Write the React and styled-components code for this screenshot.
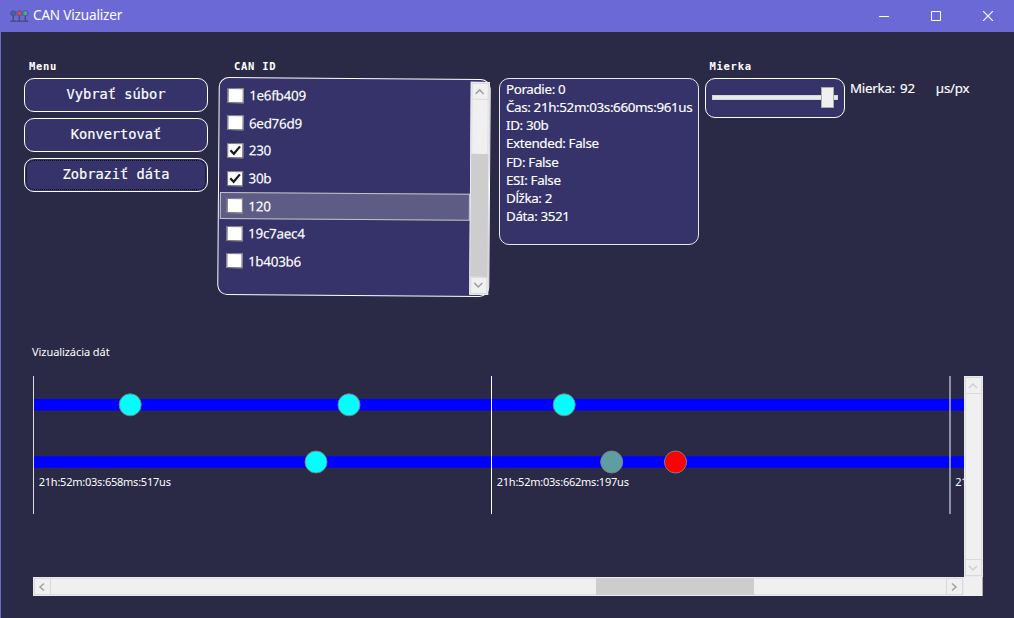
import React from "react";
import styled, { createGlobalStyle } from "styled-components";

const accent = "#6b69d6";
const panel = "#353369";
const sans = '"Noto Sans", "Open Sans", sans-serif';
const mono = '"DejaVu Sans Mono", "Liberation Mono", monospace';

const GlobalStyle = createGlobalStyle`
  *, *::before, *::after { box-sizing: border-box; }
  body { margin: 0; background: #2a2946; color: #fff; font-family: ${sans}; overflow: hidden; }
`;

const Window = styled.div`
  display: flex;
  flex-direction: column;
  width: 1014px;
  height: 618px;
  background: #2a2946;
  border-left: 1px solid ${accent};
`;

const TitleBar = styled.header`
  display: flex;
  align-items: center;
  height: 32px;
  padding-left: 9px;
  background: ${accent};
`;

const Title = styled.h1`
  flex: 1;
  margin: 0 0 2px 4px;
  font-size: 13.5px;
  font-weight: 400;
  letter-spacing: -0.15px;
`;

const Controls = styled.div`
  display: flex;
  height: 28px;
`;

const ControlButton = styled.button`
  display: grid;
  place-items: center;
  width: 52px;
  padding: 0;
  border: 0;
  background: none;
  color: #fff;
`;

const Content = styled.main`
  display: flex;
  flex-direction: column;
  flex: 1;
  padding: 27px 30px 22px 23px;
`;

const TopRow = styled.section`
  display: flex;
  align-items: flex-start;
  height: 285px;
`;

const Column = styled.div`
  flex: none;
  width: ${(p) => p.$width}px;
  margin-left: ${(p) => p.$gap || 0}px;
  padding-top: ${(p) => p.$top || 0}px;
`;

const Label = styled.h2`
  height: 19px;
  margin: 0;
  padding-left: ${(p) => p.$indent || 5}px;
  font: 700 10.5px/14px ${mono};
  letter-spacing: 0.72px;
`;

const Buttons = styled.div`
  display: flex;
  flex-direction: column;
  gap: 6px;
`;

const MenuButton = styled.button`
  height: 34px;
  padding: 1px;
  border: 1px solid #fff;
  border-radius: 10px;
  background: ${panel};
  color: #fff;
  font: 13.7px/26px ${mono};
  -webkit-text-stroke: 0.2px #fff;
  span {
    display: block;
    height: 30px;
    border: 1px ${(p) => (p.$focused ? "dotted #0b0b1c" : "solid transparent")};
    border-radius: 8px;
  }
`;

const ListPanel = styled.div`
  display: flex;
  width: 271.5px;
  height: 217.5px;
  padding: 2px 0 1px 1px;
  border: 1px solid #fff;
  border-radius: 10px;
  background: ${panel};
  transform: rotate(0.42deg);
`;

const Rows = styled.ul`
  flex: 1;
  margin: 0;
  padding: 1.5px 0 0;
  list-style: none;
`;

const Row = styled.li`
  display: flex;
  align-items: center;
  height: 27.6px;
  padding-left: 6px;
  gap: 5.5px;
  border: 1px solid ${(p) => (p.$selected ? "#c2c2cc" : "transparent")};
  background: ${(p) => (p.$selected ? "#5e5c84" : "transparent")};
  font-size: 13.4px;
  letter-spacing: -0.25px;
  -webkit-text-stroke: 0.15px #fff;
`;

const Check = styled.span`
  display: grid;
  place-items: center;
  width: 16px;
  height: 15px;
  border: 1px solid #777;
  background: #fff;
`;

const InfoPanel = styled.div`
  height: 167px;
  padding: 0.6px 0 0 6px;
  border: 1px solid #e8e8f0;
  border-radius: 10px;
  background: ${panel};
  font-size: 13.4px;
  line-height: 18.25px;
  letter-spacing: -0.37px;
  -webkit-text-stroke: 0.15px #fff;
  white-space: nowrap;
`;

const SliderPanel = styled.div`
  display: flex;
  align-items: center;
  height: 40px;
  padding: 0 6px 2px;
  border: 1px solid #fff;
  border-radius: 10px;
  background: ${panel};
`;

const Track = styled.div`
  display: flex;
  align-items: center;
  justify-content: flex-end;
  width: 100%;
  height: 5px;
  padding-right: 3px;
  border: 1px solid #d6d6d6;
  background: #e7eaea;
`;

const Thumb = styled.span`
  width: 13px;
  height: 21px;
  border: 1px solid #acacac;
  background: #f0f0f0;
`;

const Scale = styled.div`
  display: flex;
  gap: ${(p) => p.$gap}px;
  font-size: 13.3px;
  line-height: 18px;
  white-space: nowrap;
  letter-spacing: -0.22px;
  -webkit-text-stroke: 0.15px #fff;
`;

const ChartTitle = styled.h2`
  height: 32px;
  margin: 0;
  padding-left: 8px;
  font-size: 11px;
  line-height: 16px;
  font-weight: 400;
  letter-spacing: -0.07px;
`;

const ChartFrame = styled.section`
  display: grid;
  grid-template-columns: 931px 19px;
  grid-template-rows: 201px 19px;
  margin-left: 9px;
`;

const Bar = styled.div`
  display: flex;
  flex-direction: ${(p) => (p.$vertical ? "column" : "row")};
  width: ${(p) => (p.$vertical ? p.$size + "px" : "auto")};
  height: ${(p) => (p.$vertical ? "auto" : p.$size + "px")};
  border: 1px solid #e9e9f0;
  background: #f0f0f0;
`;

const BarArrow = styled.button`
  display: grid;
  place-items: center;
  flex: none;
  width: 17px;
  height: 17px;
  padding: 0 1px 0 0;
  border: 1px solid #dadada;
  background: #f0f0f0;
  color: ${(p) => (p.$dim ? "#cfcfcf" : "#a0a0a0")};
`;

const BarTrack = styled.div`
  flex: ${(p) => p.$flex || 1};
  background: ${(p) => (p.$thumb ? "#cdcdcd" : "#f0f0f0")};
  border: solid ${(p) => (p.$thumb ? "#cdcdcd" : "#dfdfdf")};
  border-width: ${(p) => (p.$vertical ? "0 1px" : "1px 0")};
`;

const Corner = styled.div`
  background: #f0f0f0;
  border-right: 1px solid #a9a9b2;
`;

const chevrons = {
  up: "M1 7 5 3 9 7",
  down: "M1 3 5 7 9 3",
  left: "M7 1.5 3 5 7 8.5",
  right: "M3 1.5 7 5 3 8.5",
};

const Chevron = ({ dir }) => (
  <svg width="10" height="10" viewBox="0 0 10 10" fill="none" stroke="currentColor" strokeWidth="1.5">
    <path d={chevrons[dir]} />
  </svg>
);

const Logo = () => (
  <svg width="19" height="13" viewBox="0 0 19 13">
    {["#3567a8", "#d5495d", "#3cae9b"].map((color, i) => (
      <g key={color} transform={`translate(${i * 6 - 0.2} 0)`}>
        <path d="M3.5 5v6M.6 11.3h5.8" stroke="#4b4c80" strokeWidth="1.5" />
        <circle cx="3.5" cy="3.3" r="2.6" fill={color} stroke="#56518a" strokeWidth="1" />
      </g>
    ))}
  </svg>
);

const ids = [
  ["1e6fb409"], ["6ed76d9"], ["230", true], ["30b", true], ["120", false, true], ["19c7aec4"], ["1b403b6"],
];

const details = [
  "Poradie: 0", "Čas: 21h:52m:03s:660ms:961us", "ID: 30b", "Extended: False",
  "FD: False", "ESI: False", "Dĺžka: 2", "Dáta: 3521",
];

const ticks = [
  { x: 0.5, text: "21h:52m:03s:658ms:517us", color: "#dcdce2" },
  { x: 458.5, text: "21h:52m:03s:662ms:197us", color: "#fff" },
  { x: 917, text: "21h:52m:03s:665ms:877us", color: "#aaaac0" },
];

const frames = [
  [97.2, 28.8, "#0ff"], [316, 28.8, "#0ff"], [531.2, 28.8, "#0ff"],
  [283, 86, "#0ff"], [578.7, 86, "#5f9ea0"], [642.5, 86, "#f00"],
];

const Timeline = () => (
  <svg width="931" height="201" viewBox="0 0 931 201">
    <path d="M1 28.8h930M1 86h930" stroke="#00f" strokeWidth="11.5" />
    {ticks.map((t) => (
      <g key={t.x}>
        <path d={`M${t.x} 0v138`} stroke={t.color} strokeWidth={t.x === 917 ? 1.6 : 1} />
        <text x={t.x + 5.2} y="110" fill="#fff" fontFamily={sans} fontSize="11" letterSpacing="-0.23">{t.text}</text>
      </g>
    ))}
    {frames.map(([x, y, color]) => (
      <circle key={x} cx={x} cy={y} r="11" fill={color} stroke="#808080" strokeWidth="1" />
    ))}
  </svg>
);

export default function App() {
  return (
    <Window>
      <GlobalStyle />
      <TitleBar>
        <Logo />
        <Title>CAN Vizualizer</Title>
        <Controls>
          <ControlButton aria-label="Minimalizovať">
            <svg width="10" height="10"><path d="M0 5.5h10" stroke="#fff" /></svg>
          </ControlButton>
          <ControlButton aria-label="Maximalizovať">
            <svg width="10" height="10"><path d="M.5.5h9v9h-9z" fill="none" stroke="#fff" /></svg>
          </ControlButton>
          <ControlButton aria-label="Zavrieť">
            <svg width="10" height="10"><path d="M0 0 10 10M10 0 0 10" stroke="#fff" strokeWidth="1.1" /></svg>
          </ControlButton>
        </Controls>
      </TitleBar>
      <Content>
        <TopRow>
          <Column $width={184}>
            <Label>Menu</Label>
            <Buttons>
              <MenuButton><span>Vybrať súbor</span></MenuButton>
              <MenuButton><span>Konvertovať</span></MenuButton>
              <MenuButton $focused><span>Zobraziť dáta</span></MenuButton>
            </Buttons>
          </Column>
          <Column $width={271} $gap={10}>
            <Label $indent={16}>CAN ID</Label>
            <ListPanel>
              <Rows>
                {ids.map(([id, checked, selected]) => (
                  <Row key={id} $selected={selected}>
                    <Check>
                      {checked && (
                        <svg width="12" height="11" viewBox="0 0 12 11" fill="none" stroke="#1a1a1a" strokeWidth="2.2">
                          <path d="M1.2 5.2 4.6 8.7 10.8 1.2" />
                        </svg>
                      )}
                    </Check>
                    {id}
                  </Row>
                ))}
              </Rows>
              <Bar $vertical $size={19}>
                <BarArrow><Chevron dir="up" /></BarArrow>
                <BarTrack $vertical $flex={54} />
                <BarTrack $vertical $thumb $flex={124} />
                <BarArrow><Chevron dir="down" /></BarArrow>
              </Bar>
            </ListPanel>
          </Column>
          <Column $width={200} $gap={10} $top={19}>
            <InfoPanel>
              {details.map((line) => <div key={line}>{line}</div>)}
            </InfoPanel>
          </Column>
          <Column $width={140} $gap={5.5}>
            <Label>Mierka</Label>
            <SliderPanel>
              <Track><Thumb /></Track>
            </SliderPanel>
          </Column>
          <Column $width={124} $gap={5.5} $top={20}>
            <Scale $gap={21}>
              <Scale $gap={5}><span>Mierka:</span><span>92</span></Scale>
              <span>µs/px</span>
            </Scale>
          </Column>
        </TopRow>
        <ChartTitle>Vizualizácia dát</ChartTitle>
        <ChartFrame>
          <Timeline />
          <Bar $vertical $size={19}>
            <BarArrow $dim><Chevron dir="up" /></BarArrow>
            <BarTrack $vertical />
            <BarArrow $dim><Chevron dir="down" /></BarArrow>
          </Bar>
          <Bar $size={19}>
            <BarArrow><Chevron dir="left" /></BarArrow>
            <BarTrack $flex={545} />
            <BarTrack $thumb $flex={158} />
            <BarTrack $flex={192} />
            <BarArrow><Chevron dir="right" /></BarArrow>
          </Bar>
          <Corner />
        </ChartFrame>
      </Content>
    </Window>
  );
}
